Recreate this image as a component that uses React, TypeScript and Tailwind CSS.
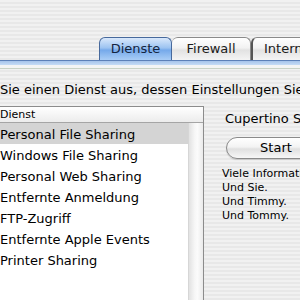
const services = [
  'Personal File Sharing',
  'Windows File Sharing',
  'Personal Web Sharing',
  'Entfernte Anmeldung',
  'FTP-Zugriff',
  'Entfernte Apple Events',
  'Printer Sharing',
]

const info = ['Viele Informationen.', 'Und Sie.', 'Und Timmy.', 'Und Tommy.']

export default function App() {
  return (
    <div className="h-[300px] w-[300px] overflow-hidden bg-[repeating-linear-gradient(180deg,#f1f1f1_0px,#f1f1f1_2px,#e8e8e8_2px,#e8e8e8_4px)] font-['DejaVu_Sans',sans-serif] text-black">
      {/* tab strip */}
      <div className="flex h-[60px] items-end pl-[99px]">
        <div className="flex h-[23px] w-[73px] shrink-0 items-center justify-center rounded-t-[6px] border border-b-0 border-[#47699c] bg-[linear-gradient(180deg,#d9e8fb_0%,#9cc3f1_45%,#75a9ea_55%,#a9cdf6_100%)] text-[13px] text-[#13243f]">
          Dienste
        </div>
        <div className="flex h-[23px] w-[79px] shrink-0 items-center justify-center rounded-t-[6px] border border-b-0 border-l-0 border-[#8a8a8a] bg-[linear-gradient(180deg,#ffffff_0%,#f2f2f2_45%,#e2e2e2_55%,#f4f4f4_100%)] text-[13px] text-[#1a1a1a]">
          Firewall
        </div>
        <div className="flex h-[23px] w-[80px] shrink-0 items-center rounded-t-[6px] border border-b-0 border-l-2 border-[#8a8a8a] border-l-[#555] bg-[linear-gradient(180deg,#ffffff_0%,#f2f2f2_45%,#e2e2e2_55%,#f4f4f4_100%)] pl-[11px] text-[13px] text-[#1a1a1a]">
          Internet
        </div>
      </div>
      <div className="h-[5px] border-t border-[#5d80b8] bg-[linear-gradient(180deg,#a6c3ea,#c6dcf6)]" />
      <div className="h-[4px] border-b border-[#c9d2c6] bg-[#f4f4f4]" />

      <p className="mt-[13px] whitespace-nowrap text-[13px] leading-[16px]">
        Sie einen Dienst aus, dessen Einstellungen Sie ändern möchten.
      </p>

      <div className="mt-[8px] flex">
        {/* service list */}
        <div className="w-[204px] shrink-0 border-t border-r border-[#8c8c8c] bg-white">
          <div className="h-[16px] border-b border-[#a5a5a5] bg-[linear-gradient(180deg,#ffffff,#ececec)] text-[11px] leading-[15px]">
            Dienst
          </div>
          <div className="flex">
            <ul className="w-[188px] shrink-0">
              {services.map((name, i) => (
                <li
                  key={name}
                  className={`h-[21px] whitespace-nowrap pt-[2px] text-[13px] leading-[20px] ${
                    i === 0 ? 'bg-[#d4d4d4]' : ''
                  }`}
                >
                  {name}
                </li>
              ))}
              <li className="h-[40px]" />
            </ul>
            <div className="flex-1 border-l border-[#d6d6d6] bg-[linear-gradient(90deg,#e2e2e2,#f6f6f6_40%,#fbfbfb_60%,#ebebeb)]" />
          </div>
        </div>

        {/* detail panel */}
        <div className="flex-1 pl-[18px]">
          <p className="mt-[5px] whitespace-nowrap pl-[3px] text-[13px] leading-[16px]">
            Cupertino Services
          </p>
          <button className="mt-[10px] ml-[4px] flex h-[22px] w-[100px] items-center justify-center rounded-full border border-[#8a8a8a] bg-[linear-gradient(180deg,#ffffff_0%,#f3f3f3_45%,#e0e0e0_55%,#f7f7f7_100%)] text-[13px] shadow-[0_1px_1px_rgba(0,0,0,0.15)]">
            Start
          </button>
          <div className="mt-[8px] whitespace-nowrap text-[11px] leading-[14px]">
            {info.map((line) => (
              <p key={line}>{line}</p>
            ))}
          </div>
        </div>
      </div>
    </div>
  )
}
